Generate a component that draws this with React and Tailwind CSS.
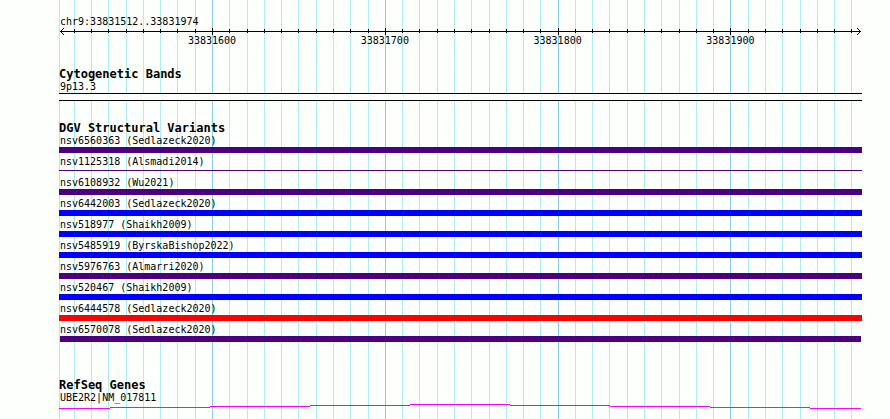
import React from 'react';

const START = 33831512;
const END = 33831974;
const SPAN = END - START + 1;

const variants = [
  { id: 'nsv6560363', study: 'Sedlazeck2020', bar: 'h-1.5 bg-[#4b0082]' },
  { id: 'nsv1125318', study: 'Alsmadi2014', bar: 'h-px bg-[#4b0082]' },
  { id: 'nsv6108932', study: 'Wu2021', bar: 'h-1.5 bg-[#4b0082]' },
  { id: 'nsv6442003', study: 'Sedlazeck2020', bar: 'h-1.5 bg-[#0000ff]' },
  { id: 'nsv518977', study: 'Shaikh2009', bar: 'h-1.5 bg-[#0000ff]' },
  { id: 'nsv5485919', study: 'ByrskaBishop2022', bar: 'h-1.5 bg-[#0000ff]' },
  { id: 'nsv5976763', study: 'Almarri2020', bar: 'h-1.5 bg-[#4b0082]' },
  { id: 'nsv520467', study: 'Shaikh2009', bar: 'h-1.5 bg-[#0000ff]' },
  { id: 'nsv6444578', study: 'Sedlazeck2020', bar: 'h-1.5 bg-[#ff0000]' },
  { id: 'nsv6570078', study: 'Sedlazeck2020', bar: 'h-1.5 mx-px bg-[#4b0082]' },
];

// one tick every 10 bases, a major one every 100
const ticks = [];
for (let pos = Math.ceil(START / 10) * 10; pos <= END; pos += 10) {
  ticks.push({ pos, major: pos % 100 === 0, left: `${((pos - START) / SPAN) * 100}%` });
}

function GridLines() {
  return (
    <div className="absolute inset-0" aria-hidden="true">
      <div className="absolute inset-y-0 left-0 w-px bg-[#afeeee]"></div>
      <div className="absolute inset-y-0 left-px right-0.5">
        {ticks.map((t) => (
          <div
            key={t.pos}
            className={`absolute inset-y-0 w-px ${t.major ? 'bg-[#87ceeb]' : 'bg-[#afeeee]'}`}
            style={{ left: t.left }}
          ></div>
        ))}
      </div>
    </div>
  );
}

function Ruler() {
  return (
    <div className="relative ml-px mr-0.5 h-[18px]">
      <div className="absolute left-0 right-0 top-[3px] h-px bg-black"></div>
      <svg className="absolute left-0 top-0" width="4" height="7" viewBox="0 0 4 7" shapeRendering="crispEdges">
        <path d="M0 3h1v1H0zM1 2h1v1H1zM1 4h1v1H1zM2 1h1v1H2zM2 5h1v1H2zM3 0h1v1H3zM3 6h1v1H3z" />
      </svg>
      <svg className="absolute -right-px top-0" width="4" height="7" viewBox="0 0 4 7" shapeRendering="crispEdges">
        <path d="M3 3h1v1H3zM2 2h1v1H2zM2 4h1v1H2zM1 1h1v1H1zM1 5h1v1H1zM0 0h1v1H0zM0 6h1v1H0z" />
      </svg>
      {ticks.map((t) => (
        <div
          key={t.pos}
          className={`absolute w-px bg-black ${t.major ? 'top-0 h-[7px]' : 'top-px h-1'}`}
          style={{ left: t.left }}
        ></div>
      ))}
      {ticks.filter((t) => t.major).map((t) => (
        <span
          key={t.pos}
          className="absolute top-[7px] -translate-x-1/2 leading-3"
          style={{ left: t.left }}
        >
          {t.pos}
        </span>
      ))}
    </div>
  );
}

function TrackTitle({ children }) {
  return <h2 className="text-[12px] leading-3 font-bold whitespace-nowrap">{children}</h2>;
}

function FeatureLabel({ children }) {
  return <p className="pt-px pl-px leading-3 whitespace-nowrap">{children}</p>;
}

export default function App() {
  return (
    <div className="min-h-screen bg-[#fdfffc] pl-[59px] pr-7 text-black text-[10px] font-['DejaVu_Sans_Mono',monospace]">
      <main className="relative min-h-screen">
        <GridLines />
        <div className="relative pt-[15px]">
          <FeatureLabel>chr9:{START}..{END}</FeatureLabel>
          <Ruler />

          <section className="mt-[22px]">
            <TrackTitle>Cytogenetic Bands</TrackTitle>
            <FeatureLabel>9p13.3</FeatureLabel>
            <div className="h-2 border-y border-black bg-[#fdfffc]"></div>
          </section>

          <section className="mt-[21px]">
            <TrackTitle>DGV Structural Variants</TrackTitle>
            <ul>
              {variants.map((v) => (
                <li key={v.id} className="h-[21px]">
                  <FeatureLabel>{v.id} ({v.study})</FeatureLabel>
                  <div className="flex h-[5px] flex-col justify-center">
                    <div className={`shrink-0 ${v.bar}`}></div>
                  </div>
                </li>
              ))}
            </ul>
          </section>

          <section className="mt-[35px]">
            <TrackTitle>RefSeq Genes</TrackTitle>
            <FeatureLabel>UBE2R2|NM_017811</FeatureLabel>
            {/* intron drawn as a shallow stepped arch */}
            <svg
              className="block h-[5px] w-full pr-px"
              viewBox="0 0 802 5"
              preserveAspectRatio="none"
              shapeRendering="crispEdges"
              fill="#ff00ff"
            >
              <path d="M0 4h51v1H0zM51 3h100v1H51zM151 2h100v1H151zM251 1h100v1H251zM351 0h100v1H351zM451 1h100v1H451zM551 2h100v1H551zM651 3h100v1H651zM751 4h51v1H751z" />
            </svg>
          </section>
        </div>
      </main>
    </div>
  );
}
